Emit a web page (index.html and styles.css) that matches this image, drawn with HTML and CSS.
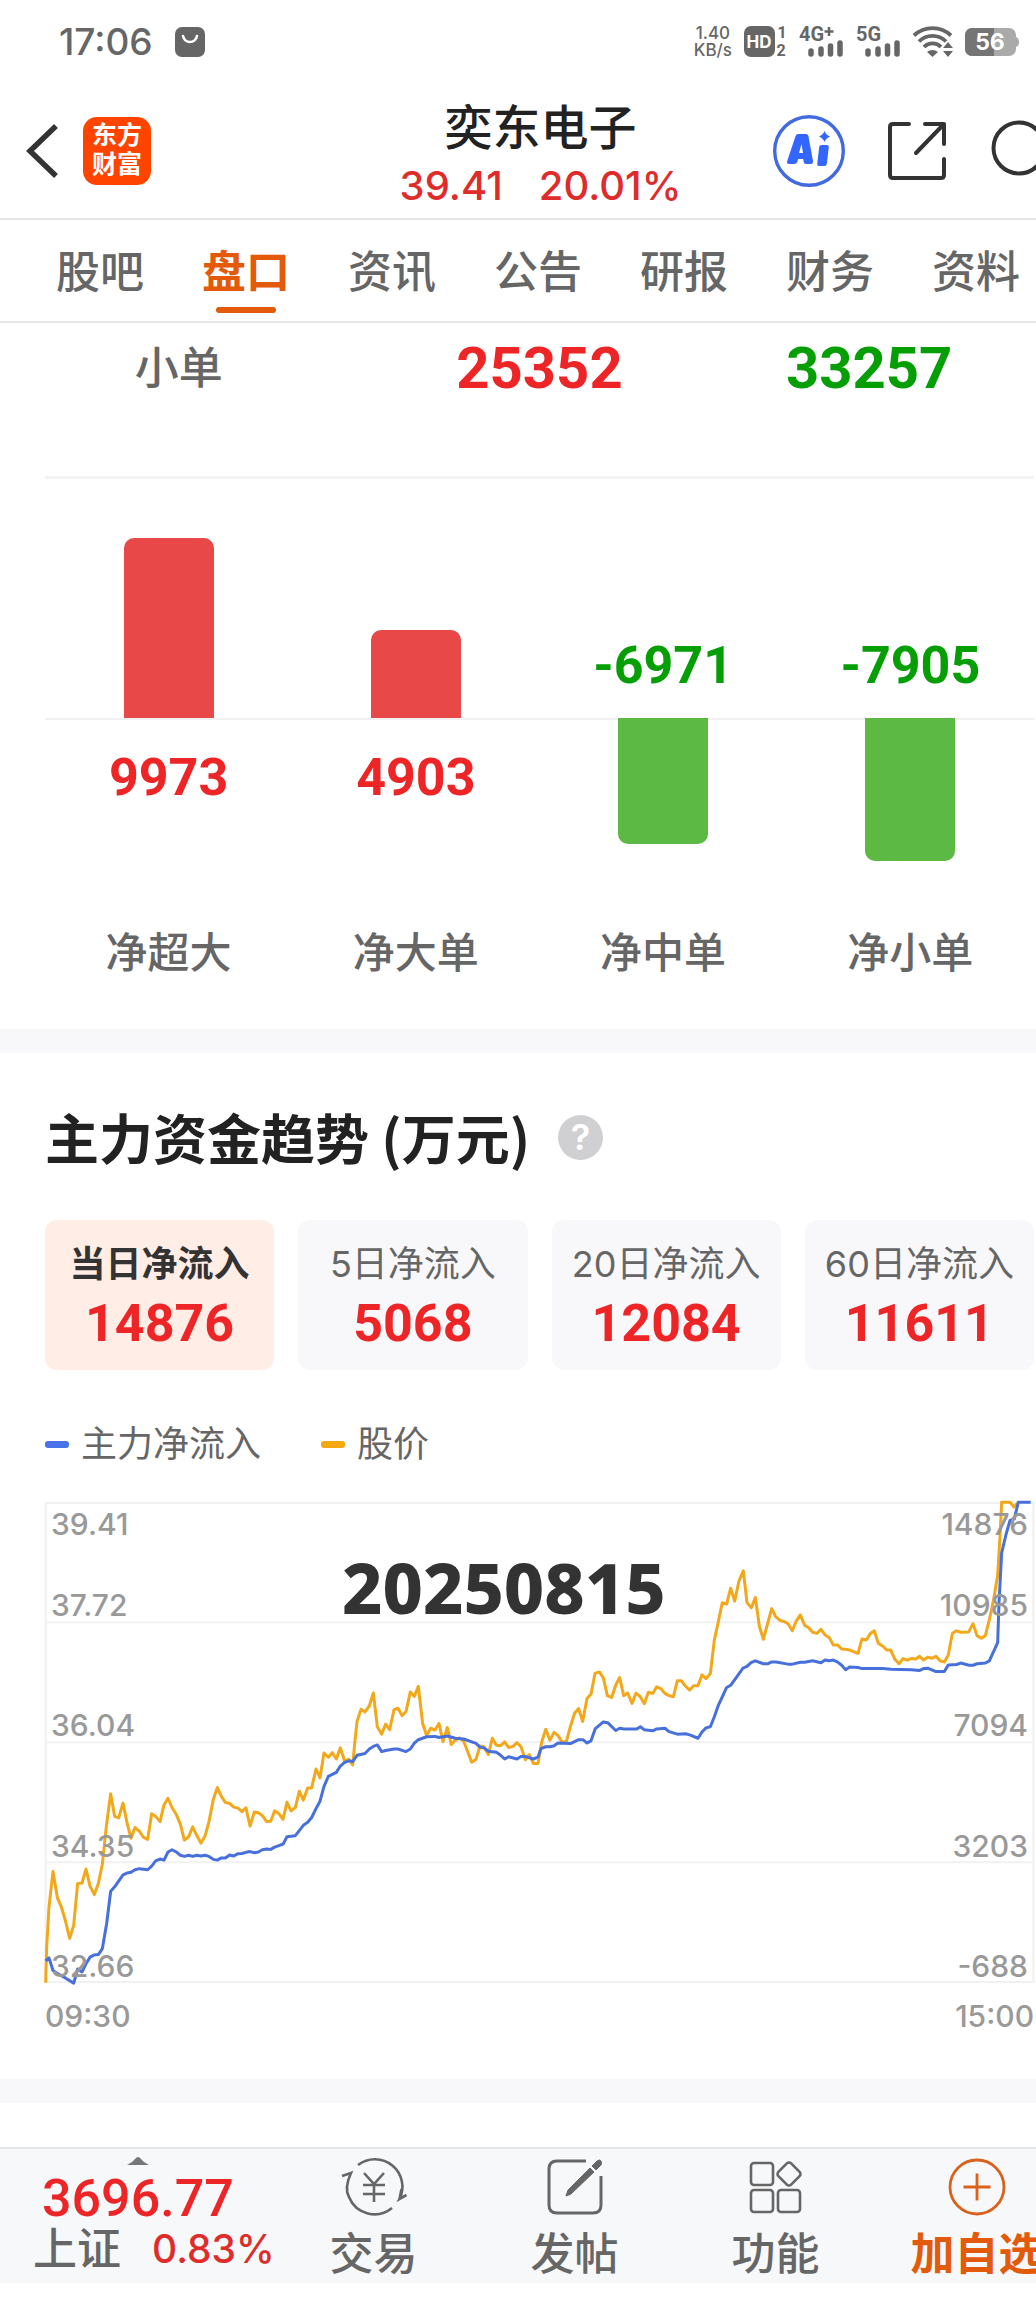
FILE: index.html
```html
<!DOCTYPE html>
<html lang="zh-CN">
<head>
<meta charset="utf-8">
<meta name="viewport" content="width=device-width, initial-scale=1">
<title>奕东电子 - 盘口</title>
<link rel="stylesheet" href="styles.css">
</head>
<body>
<div class="page">
  <div class="status">
    <div class="status-side">
      <span class="clock">17:06</span>
      <svg width="30" height="30" viewBox="0 0 30 30"><rect width="30" height="30" rx="7" fill="#666"/><path d="M8 9c2 8 12 8 14 0" fill="none" stroke="#fff" stroke-width="2.6" stroke-linecap="round"/></svg>
    </div>
    <div class="status-side status-right">
      <span class="speed">1.40<br>KB/s</span>
      <svg width="43" height="32" viewBox="0 0 43 32"><rect width="31" height="31" rx="7" fill="#666"/><text x="15" y="22" text-anchor="middle" class="hd">HD</text><text x="38" y="12" text-anchor="middle" class="sim">1</text><text x="37" y="30" text-anchor="middle" class="sim">2</text></svg>
      <svg width="45" height="32" viewBox="0 0 45 32"><text x="0" y="15" class="net">4G</text><path d="M30 1v9M25.500 5.500h9" stroke="#666" stroke-width="2.500"/><g stroke="#666" stroke-width="5.500" stroke-linecap="round"><path d="M12 25v3M22 23v5M31.500 20v8M41 17v11"/></g></svg>
      <svg width="45" height="32" viewBox="0 0 45 32"><text x="0" y="15" class="net">5G</text><g stroke="#666" stroke-width="5.500" stroke-linecap="round"><path d="M12 25v3M22 23v5M31.500 20v8M41 17v11"/></g></svg>
      <svg width="40" height="32" viewBox="0 0 40 32"><g fill="none" stroke="#666" stroke-width="3.800"><path d="M1 9.500a27 27 0 0 1 37 0M6 15.500a19 19 0 0 1 27 0M11 21a12 12 0 0 1 17 0"/></g><path d="M14 26q5.500-4 11 0l-5.500 5zM30 22l5-6 5 6zM30 25l5 6 5-6z" fill="#666"/></svg>
      <svg width="55" height="30" viewBox="0 0 55 30"><rect y="1" width="51" height="28" rx="7" fill="#aaa"/><path d="M7 1h22v28H7a7 7 0 0 1-7-7V8a7 7 0 0 1 7-7z" fill="#757575"/><path d="M51 10q3 1 3 5t-3 5z" fill="#aaa"/><text x="25" y="23" text-anchor="middle" class="battery">56</text></svg>
    </div>
  </div>

  <header class="header">
    <div class="header-left">
      <button class="icon-button" aria-label="返回"><svg width="32" height="56" viewBox="0 0 32 56"><path d="M29 3L3 28l26 25" fill="none" stroke="#333" stroke-width="5.500"/></svg></button>
      <a class="logo" href="#">东方<br>财富</a>
    </div>
    <div class="stock">
      <h1 class="stock-name">奕东电子</h1>
      <p class="stock-quote"><span>39.41</span><span>20.01%</span></p>
    </div>
    <div class="header-tools">
      <button class="icon-button" aria-label="AI"><svg width="72" height="72" viewBox="0 0 72 72"><circle cx="36" cy="36" r="34.300" fill="none" stroke="#4169e1" stroke-width="3.400"/><path d="M24.500 19h8.500q2 0 2.400 2l4.600 25q.4 3-2.500 3H33q-2 0-2.300-2l-.5-3h-5l-1 3q-.8 2-3 2h-5q-3 0-2-3l8.200-24.500q.7-2.500 2.600-2.500zM28.500 29l-2.500 9h4z" fill="#3366ff" fill-rule="evenodd"/><path d="M48.500 30H54q2 0 1.800 2l-2 17q-.3 2-2.300 2H46q-2 0-1.800-2l2-17q.3-2 2.300-2zM51.500 16q1.500 4 5.500 5.500-4 1.500-5.500 5.500-1.500-4-5.500-5.500 4-1.500 5.500-5.500z" fill="#3366ff"/></svg></button>
      <button class="icon-button" aria-label="分享"><svg width="58" height="58" viewBox="0 0 58 58"><g fill="none" stroke="#333" stroke-width="4" stroke-linecap="round" stroke-linejoin="round"><path d="M21 2H5q-3 0-3 3v48q0 3 3 3h48q3 0 3-3V37M37 2h19v20M55 3L28 31"/></g></svg></button>
      <button class="icon-button" aria-label="搜索"><svg width="66" height="66" viewBox="0 0 66 66"><g fill="none" stroke="#333" stroke-width="4"><circle cx="30" cy="30" r="25.500"/><path d="M48 48l15 15"/></g></svg></button>
    </div>
  </header>

  <nav class="tabs">
    <a class="tab" href="#">股吧</a>
    <a class="tab tab-active" href="#">盘口</a>
    <a class="tab" href="#">资讯</a>
    <a class="tab" href="#">公告</a>
    <a class="tab" href="#">研报</a>
    <a class="tab" href="#">财务</a>
    <a class="tab" href="#">资料</a>
  </nav>

  <main>
    <section class="section flow">
      <table class="orders">
        <tr><th scope="row">小单</th><td class="up">25352</td><td class="down">33257</td></tr>
      </table>
      <div class="bars">
        <div class="column">
          <div class="above"><div class="bar bar-up" style="height:180px"></div></div>
          <div class="below"><span class="value up">9973</span></div>
          <span class="bar-label">净超大</span>
        </div>
        <div class="column">
          <div class="above"><div class="bar bar-up" style="height:88px"></div></div>
          <div class="below"><span class="value up">4903</span></div>
          <span class="bar-label">净大单</span>
        </div>
        <div class="column">
          <div class="above"><span class="value down">-6971</span></div>
          <div class="below"><div class="bar bar-down" style="height:126px"></div></div>
          <span class="bar-label">净中单</span>
        </div>
        <div class="column">
          <div class="above"><span class="value down">-7905</span></div>
          <div class="below"><div class="bar bar-down" style="height:143px"></div></div>
          <span class="bar-label">净小单</span>
        </div>
      </div>
    </section>

    <section class="section trend">
      <div class="trend-head">
        <h2 class="trend-title">主力资金趋势 (万元)</h2>
        <button class="help" aria-label="说明">?</button>
      </div>
      <div class="periods">
        <button class="period period-active"><span class="period-name">当日净流入</span><span class="period-value">14876</span></button>
        <button class="period"><span class="period-name">5日净流入</span><span class="period-value">5068</span></button>
        <button class="period"><span class="period-name">20日净流入</span><span class="period-value">12084</span></button>
        <button class="period"><span class="period-name">60日净流入</span><span class="period-value">11611</span></button>
      </div>
      <div class="legend">
        <span class="legend-item"><i class="dash dash-flow"></i>主力净流入</span>
        <span class="legend-item"><i class="dash dash-price"></i>股价</span>
      </div>
      <div class="chart">
        <svg class="plot" viewBox="135 60 2967 1293" preserveAspectRatio="none">
          <path class="grid" d="M137 60H3100V1353H137zM137 382H3100M137 706H3100M137 1030H3100"/>
          <polyline class="line price" points="137,1355 140,1260 147,1150 159,1055 172,1125 184,1150 196,1187 209,1235 221,1200 233,1087 246,1086 258,1048 270,1094 283,1117 295,1087 307,1035 320,925 332,845 344,906 356,910 369,870 381,923 393,965 405,936 418,946 430,962 443,968 455,899 467,906 480,920 492,875 504,857 516,882 529,901 541,927 553,970 566,961 578,934 590,957 603,978 615,959 627,920 640,860 652,828 664,852 676,868 689,871 701,881 713,883 726,893 738,883 750,932 763,894 775,896 787,904 800,920 812,919 824,891 836,898 849,914 861,868 873,891 886,882 898,838 910,862 923,829 935,829 948,778 960,802 972,735 985,746 997,734 1009,751 1021,721 1034,757 1046,752 1058,767 1064,710 1071,650 1083,617 1095,624 1108,608 1120,573 1132,664 1145,684 1157,657 1169,672 1182,618 1194,614 1206,634 1218,623 1231,570 1243,582 1255,555 1268,656 1280,688 1292,668 1305,673 1317,655 1329,704 1342,666 1354,712 1366,700 1378,694 1391,703 1403,731 1415,760 1428,752 1440,716 1452,718 1465,739 1477,695 1489,714 1502,715 1514,705 1526,720 1539,717 1551,707 1563,718 1576,753 1588,739 1600,763 1614,763 1625,706 1637,671 1650,700 1662,679 1674,688 1687,706 1699,704 1711,664 1724,627 1736,615 1748,650 1761,588 1773,576 1785,520 1798,516 1810,532 1822,580 1835,585 1847,552 1859,531 1871,580 1883,573 1896,601 1908,573 1921,583 1933,602 1945,571 1958,574 1970,556 1982,561 1995,574 2007,580 2020,583 2032,540 2044,540 2056,554 2069,565 2081,553 2094,553 2106,524 2118,534 2131,521 2143,430 2155,380 2167,329 2180,333 2192,290 2204,325 2217,270 2230,243 2241,329 2254,343 2266,315 2278,392 2290,428 2303,385 2315,345 2327,367 2340,377 2352,380 2364,386 2377,405 2389,378 2401,362 2414,390 2426,397 2438,409 2451,412 2463,401 2475,416 2488,424 2500,443 2512,443 2525,454 2537,455 2549,457 2574,466 2586,427 2599,430 2611,412 2623,405 2635,439 2648,446 2660,457 2672,457 2685,482 2697,494 2709,480 2722,484 2734,480 2747,481 2759,474 2771,484 2783,476 2796,479 2808,474 2820,486 2833,489 2845,470 2857,412 2869,405 2882,409 2906,408 2919,386 2931,418 2944,425 2956,418 2968,375 2980,325 2993,255 3000,150 3005,58 3030,58 3042,71 3055,58"/>
          <polyline class="line inflow" points="137,1296 147,1288 159,1322 172,1330 196,1342 221,1356 233,1318 246,1326 258,1304 270,1286 283,1280 295,1279 307,1263 320,1195 332,1108 344,1096 369,1064 381,1059 393,1057 405,1050 418,1047 443,1050 455,1040 467,1026 480,1021 492,1024 504,1002 516,996 529,1002 541,1011 553,1014 566,1011 578,1014 590,1011 603,1013 615,1011 627,1014 640,1022 652,1024 664,1018 676,1018 689,1010 701,1013 713,1007 726,1006 738,1003 750,1001 763,1004 775,1002 787,996 800,994 812,995 824,989 849,981 861,961 886,958 910,930 923,922 935,909 948,885 960,865 972,825 985,798 1009,787 1021,770 1034,760 1046,756 1058,758 1071,741 1095,736 1108,724 1120,717 1132,713 1145,731 1157,728 1182,724 1194,724 1218,731 1231,724 1243,708 1255,699 1280,691 1305,690 1317,693 1342,689 1366,695 1391,697 1428,709 1440,719 1452,721 1465,730 1489,733 1502,741 1514,751 1526,745 1551,751 1563,744 1575,744 1600,751 1614,746 1623,723 1637,718 1648,718 1661,716 1674,708 1713,709 1736,699 1749,699 1761,708 1773,702 1786,669 1810,651 1823,653 1847,674 1859,668 1872,670 1910,670 1921,664 1933,672 1958,675 1970,670 1995,668 2007,677 2032,684 2057,683 2069,686 2094,695 2106,678 2118,667 2131,664 2143,637 2155,606 2180,558 2192,552 2229,506 2241,501 2253,491 2266,486 2290,494 2303,494 2315,489 2328,489 2364,495 2377,495 2401,490 2414,490 2438,486 2463,491 2475,484 2488,486 2500,484 2512,489 2525,498 2537,510 2549,503 2574,504 2586,507 2648,507 2673,509 2734,510 2759,512 2771,507 2783,506 2808,515 2833,515 2845,497 2870,496 2882,492 2907,498 2919,498 2931,494 2956,492 2968,486 2993,437 2997,330 3005,195 3018,145 3030,107 3043,103 3055,58 3092,58"/>
        </svg>
        <div class="scale">
          <div class="scale-row"><span>39.41</span><span>14876</span></div>
          <div class="scale-row"><span>37.72</span><span>10985</span></div>
          <div class="scale-row"><span>36.04</span><span>7094</span></div>
          <div class="scale-row"><span>34.35</span><span>3203</span></div>
          <div class="scale-row"><span>32.66</span><span>-688</span></div>
        </div>
        <span class="stamp">20250815</span>
      </div>
      <div class="times"><span>09:30</span><span>15:00</span></div>
    </section>
    <section class="section next"></section>
  </main>

  <footer class="footer">
    <a class="index" href="#">
      <svg width="22" height="8" viewBox="0 0 22 8"><path d="M0 8Q6 5 9 1q2-2 4 0 3 4 9 7z" fill="#77777b"/></svg>
      <span class="index-value">3696.77</span>
      <span class="index-row"><span class="index-name">上证</span><span class="index-rate">0.83%</span></span>
    </a>
    <button class="action">
      <svg width="66" height="58" viewBox="0 0 66 58"><g fill="none" stroke="#666" stroke-width="2.600"><path d="M17 7A27.500 27.500 0 0 1 58.500 41l7-4M1 18l9-3q-7 15-2 24A27.500 27.500 0 0 0 51 50M58.500 41l2-10"/><path d="M23 15l10 11 10-11M33 26v18M22 27h22M22 36h22"/></g></svg>
      <span>交易</span>
    </button>
    <button class="action">
      <svg width="58" height="58" viewBox="0 0 58 58"><path d="M40 3H11q-8 0-8 8v36q0 8 8 8h36q8 0 8-8V18" fill="none" stroke="#666" stroke-width="3"/><path d="M44 10l4 4-23 22-5 2 2-6zM46 8l5-5q3-2 4 0t0 4l-5 5z" fill="#666" stroke="#666" stroke-width="1"/></svg>
      <span>发帖</span>
    </button>
    <button class="action">
      <svg width="58" height="58" viewBox="0 0 58 58"><g fill="none" stroke="#666" stroke-width="2.600"><rect x="4" y="5" width="22" height="22" rx="3"/><rect x="4" y="32" width="22" height="22" rx="3"/><rect x="31" y="32" width="22" height="22" rx="3"/><rect x="33" y="7" width="18" height="18" rx="3" transform="rotate(45 42 16)"/></g></svg>
      <span>功能</span>
    </button>
    <button class="action action-add">
      <svg width="58" height="58" viewBox="0 0 58 58"><g fill="none" stroke="#d9611c" stroke-width="2.800"><circle cx="29" cy="29" r="27"/><path d="M29 15.500v27M15.500 29h27"/></g></svg>
      <span>加自选</span>
    </button>
  </footer>
</div>
</body>
</html>
```
FILE: styles.css
```css
* { box-sizing: border-box; }

body {
  margin: 0;
  background: #fff;
  color: #666;
  font-family: Inter, "Noto Sans CJK SC", sans-serif;
}

.page { overflow: hidden; padding-bottom: 19px; }

svg { display: block; flex: none; overflow: visible; }

a { color: inherit; text-decoration: none; }

button {
  border: 0;
  padding: 0;
  background: none;
  color: inherit;
  font: inherit;
}

h1, h2, p { margin: 0; }

.up { color: #ee2526; }
.down { color: #059f05; }

/* Status bar */
.status {
  display: flex;
  justify-content: space-between;
  align-items: center;
  height: 84px;
  padding: 0 16px 0 59px;
}
.status-side { display: flex; align-items: center; gap: 22px; }
.status-right { gap: 12px; }
.clock { font-size: 37px; line-height: 44px; font-weight: 500; }
.speed { font-size: 17px; line-height: 17px; font-weight: 500; text-align: center; }
.hd { font: 700 17px Inter, sans-serif; fill: #fff; }
.sim { font: 700 16px Roboto, sans-serif; fill: #666; }
.net { font: 700 20px Roboto, sans-serif; fill: #666; }
.battery { font: 700 23px Inter, sans-serif; fill: #fff; }

/* Header */
.header {
  display: grid;
  grid-template-columns: minmax(0, 1fr) auto minmax(0, 1fr);
  align-items: center;
  height: 136px;
  padding-left: 27px;
  border-bottom: 2px solid #e5e6e7;
}
.header-left { display: flex; align-items: center; gap: 24px; }
.logo {
  width: 68px;
  height: 68px;
  padding-top: 4px;
  border-radius: 14px;
  background: #ff4400;
  color: #fff;
  font-size: 25px;
  line-height: 29px;
  font-weight: 700;
  text-align: center;
}
.stock { padding: 10px 0 0 18px; text-align: center; }
.stock-name { color: #222; font-size: 48px; line-height: 60px; font-weight: 500; }
.stock-quote {
  display: flex;
  gap: 36px;
  color: #e02b2b;
  font-size: 40px;
  line-height: 56px;
  font-weight: 500;
}
.header-tools { display: flex; align-items: center; gap: 43px; padding-left: 92px; }

/* Tabs */
.tabs {
  display: flex;
  height: 103px;
  padding: 3px 0 0 27px;
  border-bottom: 2px solid #e5e6e7;
}
.tab {
  position: relative;
  flex: none;
  width: 146px;
  font-size: 44px;
  line-height: 98px;
  font-weight: 500;
  text-align: center;
}
.tab-active { color: #e25a0a; font-weight: 700; }
.tab-active::after {
  content: "";
  position: absolute;
  left: 43px;
  bottom: 8px;
  width: 60px;
  height: 6px;
  border-radius: 3px;
  background: #e25a0a;
}

/* Sections */
.section { padding: 0 2px 0 45px; border-bottom: 24px solid #f8f8fb; }

/* Order sizes and net flow bars */
.orders {
  width: 100%;
  height: 153px;
  border-collapse: collapse;
  table-layout: fixed;
}
.orders th, .orders td { padding: 12px 0 76px; line-height: 64px; text-align: center; }
.orders th { padding-right: 62px; font-size: 44px; font-weight: 500; }
.orders td { font-family: Roboto, sans-serif; font-size: 58px; font-weight: 700; }
.bars {
  display: grid;
  grid-template-columns: repeat(4, 1fr);
  border-top: 3px solid #f3f3f4;
  padding-bottom: 50px;
}
.column { display: flex; flex-direction: column; align-items: stretch; text-align: center; }
.above {
  display: flex;
  flex-direction: column;
  justify-content: flex-end;
  align-items: center;
  height: 239px;
}
.below {
  display: flex;
  flex-direction: column;
  align-items: center;
  height: 209px;
  box-shadow: inset 0 2px #f1f1f2;
}
.bar { width: 90px; }
.bar-up { border-radius: 10px 10px 0 0; background: #e84848; }
.bar-down { border-radius: 0 0 10px 10px; background: #5cb944; }
.value {
  margin: 32px 0 24px;
  font-family: Roboto, sans-serif;
  font-size: 52px;
  line-height: 56px;
  font-weight: 700;
}
.bar-label { font-size: 42px; line-height: 52px; font-weight: 500; }

/* Trend */
.trend { padding-top: 46px; }
.trend-head { display: flex; align-items: center; gap: 28px; height: 76px; }
.trend-title { color: #222; font: 700 54px/76px "Noto Sans CJK SC", sans-serif; }
.help {
  width: 45px;
  height: 45px;
  border-radius: 50%;
  background: #d0d0d2;
  color: #fff;
  font-size: 36px;
  line-height: 45px;
  font-weight: 600;
}
.periods {
  display: grid;
  grid-template-columns: repeat(4, 1fr);
  gap: 24px;
  margin-top: 45px;
}
.period {
  display: flex;
  flex-direction: column;
  align-items: center;
  gap: 10px;
  height: 150px;
  padding-top: 22px;
  border-radius: 12px;
  background: #f8f8fb;
  white-space: nowrap;
}
.period-active { background: #ffede6; }
.period-name { font-size: 36px; line-height: 44px; }
.period-active .period-name { color: #333; font-weight: 700; }
.period-value { color: #ee2526; font: 700 52px/56px Roboto, sans-serif; }
.legend {
  display: flex;
  gap: 60px;
  margin-top: 50px;
  font-size: 36px;
  line-height: 48px;
}
.legend-item { display: flex; align-items: center; gap: 12px; }
.dash { width: 24px; height: 7px; border-radius: 3px; }
.dash-flow { background: #4a72e8; }
.dash-price { background: #f5a811; }

.chart { position: relative; height: 479px; margin-top: 35px; }
.plot { width: 100%; height: 100%; }
.plot * { fill: none; vector-effect: non-scaling-stroke; }
.grid { stroke: #f1f1f2; stroke-width: 2px; }
.line { stroke-width: 3px; stroke-linejoin: round; }
.price { stroke: #f2a81a; }
.inflow { stroke: #4870dc; }
.scale {
  position: absolute;
  inset: 0;
  display: grid;
  grid-template-rows: 37px 81px repeat(3, 1fr);
  align-items: end;
  padding: 0 6px;
  color: #999;
  font-size: 30px;
  line-height: 32px;
  font-weight: 500;
}
.scale-row { display: flex; justify-content: space-between; }
.stamp {
  position: absolute;
  top: 36px;
  left: 297px;
  color: #333;
  font: 800 70px/96px "Noto Sans", sans-serif;
}
.times {
  display: flex;
  justify-content: space-between;
  height: 97px;
  padding-top: 17px;
  color: #999;
  font-size: 30px;
  line-height: 34px;
  font-weight: 500;
}
.next { height: 44px; border: 0; }

/* Bottom bar */
.footer {
  display: grid;
  grid-template-columns: 273px repeat(4, 201px);
  height: 136px;
  border-top: 2px solid #e4e6e8;
  background: #f7f8fa;
}
.index { position: relative; display: block; padding: 22px 0 0 33px; }
.index svg { position: absolute; top: 8px; left: 127px; }
.index-value {
  display: block;
  padding-left: 9px;
  color: #ee2526;
  font: 500 52px/56px Roboto, sans-serif;
}
.index-row { display: flex; gap: 31px; font-size: 44px; line-height: 44px; font-weight: 500; white-space: nowrap; }
.index-rate { color: #e02b2b; font-size: 39px; }
.action {
  display: flex;
  flex-direction: column;
  align-items: center;
  gap: 10px;
  padding-top: 9px;
  font-size: 44px;
  line-height: 56px;
  font-weight: 500;
  white-space: nowrap;
}
.action-add { color: #e25a0a; font-weight: 700; }
```
